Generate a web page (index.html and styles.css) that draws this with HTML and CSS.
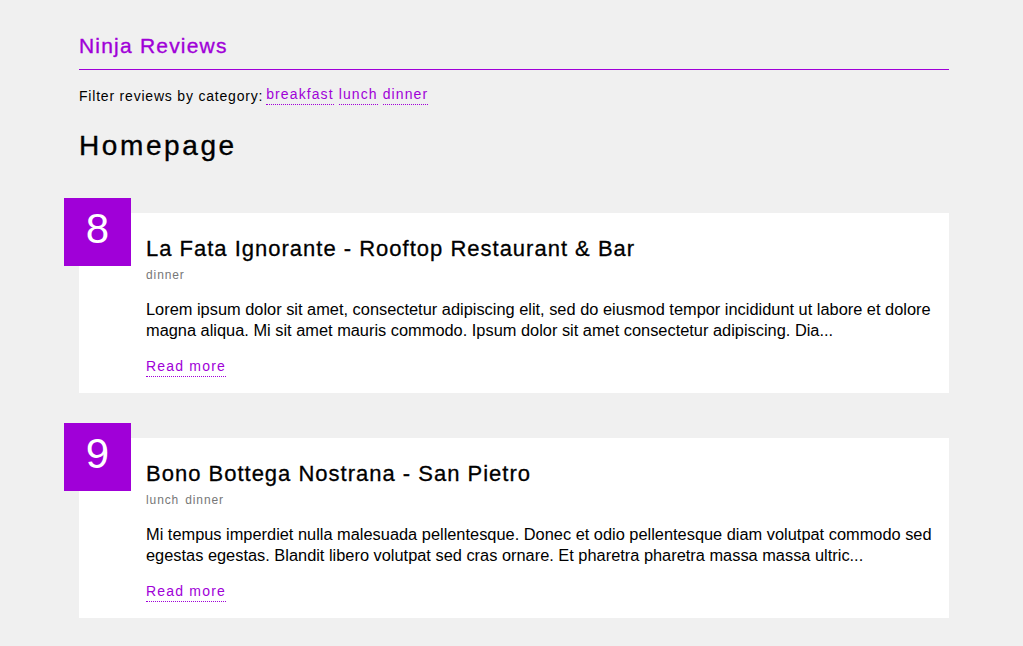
FILE: index.html
```html
<!DOCTYPE html>
<html lang="en">
<head>
<meta charset="utf-8">
<title>Ninja Reviews</title>
<link rel="stylesheet" href="styles.css">
</head>
<body>
<div class="site">
  <header class="site-header">
    <h1 class="brand">Ninja Reviews</h1>
  </header>
  <nav class="filter">
    <span class="filter-label">Filter reviews by category:</span>
    <a class="filter-link" href="#">breakfast</a>
    <a class="filter-link" href="#">lunch</a>
    <a class="filter-link" href="#">dinner</a>
  </nav>
  <h2 class="page-title">Homepage</h2>
  <div class="reviews">
    <article class="review">
      <div class="rating">8</div>
      <h3 class="review-title">La Fata Ignorante - Rooftop Restaurant &amp; Bar</h3>
      <div class="tags"><span class="tag">dinner</span></div>
      <p class="excerpt">Lorem ipsum dolor sit amet, consectetur adipiscing elit, sed do eiusmod tempor incididunt ut labore et dolore magna aliqua. Mi sit amet mauris commodo. Ipsum dolor sit amet consectetur adipiscing. Dia...</p>
      <a class="read-more" href="#">Read more</a>
    </article>
    <article class="review">
      <div class="rating">9</div>
      <h3 class="review-title">Bono Bottega Nostrana - San Pietro</h3>
      <div class="tags"><span class="tag">lunch</span><span class="tag">dinner</span></div>
      <p class="excerpt">Mi tempus imperdiet nulla malesuada pellentesque. Donec et odio pellentesque diam volutpat commodo sed egestas egestas. Blandit libero volutpat sed cras ornare. Et pharetra pharetra massa massa ultric...</p>
      <a class="read-more" href="#">Read more</a>
    </article>
  </div>
</div>
</body>
</html>
```

FILE: styles.css
```css
* { box-sizing: border-box; }
html, body { margin: 0; padding: 0; }
body {
  background: #f0f0f0;
  font-family: "Liberation Sans", Arial, sans-serif;
  color: #000;
}
.site {
  width: 870px;
  margin-left: 79px;
}
.site-header {
  border-bottom: 1px solid #a000d8;
  padding-top: 31px;
  padding-bottom: 9px;
}
.brand {
  margin: 0;
  font-size: 21px;
  font-weight: 400;
  line-height: 29px;
  letter-spacing: 1.2px;
  color: #a000d8;
  -webkit-text-stroke: 0.35px #a000d8;
}
.filter {
  margin-top: 15px;
  font-size: 14px;
  line-height: 22px;
  letter-spacing: 0.8px;
  display: flex;
  gap: 5px;
}
.filter-label {
  margin-right: -2px;
}
.filter-link {
  color: #a000d8;
  text-decoration: none;
  border-bottom: 1px dotted #a000d8;
  line-height: 19px;
  letter-spacing: 1.1px;
  align-self: flex-start;
}
.page-title {
  margin: 19px 0 0;
  font-size: 28px;
  font-weight: 400;
  line-height: 40px;
  letter-spacing: 2.6px;
  -webkit-text-stroke: 0.35px #000;
}
.reviews {
  margin-top: 47px;
  display: flex;
  flex-direction: column;
  gap: 45px;
}
.review {
  position: relative;
  background: #fff;
  padding: 20px 17.2px 16px 67px;
}
.rating {
  position: absolute;
  top: -15px;
  left: -15px;
  width: 67px;
  height: 68px;
  background: #a000d8;
  color: #fff;
  font-size: 42px;
  line-height: 62px;
  text-align: center;
}
.review-title {
  margin: 0;
  font-size: 22px;
  font-weight: 400;
  line-height: 32px;
  letter-spacing: 1px;
  -webkit-text-stroke: 0.3px #000;
}
.tags {
  font-size: 12px;
  line-height: 20px;
  letter-spacing: 0.9px;
  color: #777;
  display: flex;
  gap: 6px;
}
.excerpt {
  margin: 14px 0 0;
  font-size: 16.39px;
  line-height: 21px;
}
.read-more {
  display: inline-block;
  margin-top: 16px;
  font-size: 14px;
  line-height: 19px;
  letter-spacing: 1.2px;
  color: #a000d8;
  text-decoration: none;
  border-bottom: 1px dotted #a000d8;
}
```
